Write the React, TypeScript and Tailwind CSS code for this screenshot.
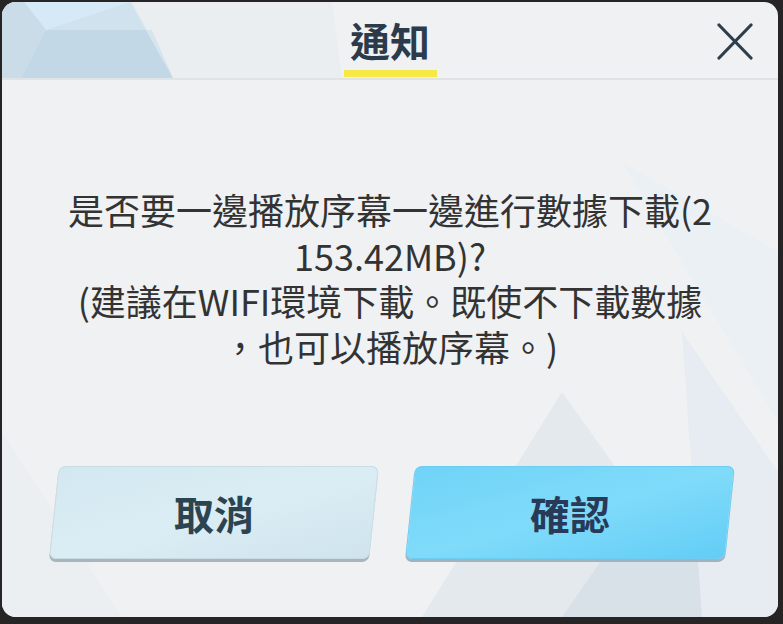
import React from "react";

const cjk = { fontFamily: '"Noto Sans CJK TC", "Noto Sans", sans-serif' };

export default function App() {
  return (
    <div className="w-[783px] h-[624px] bg-[#262425] pt-[2px] pl-[2px]" style={cjk}>
      <div className="relative w-[776px] h-[615px] rounded-[14px] bg-[#eff1f3] overflow-hidden">
        <svg className="absolute inset-0" width="776" height="615" viewBox="0 0 776 615">
          <polygon points="0,0 130,0 172,78 0,78" fill="#cfe2ee" />
          <polygon points="22,0 128,0 44,28" fill="#d5e9f7" />
          <polygon points="44,28 150,28 172,78 18,78" fill="#c2d8e6" />
          <polygon points="0,0 22,0 44,28 18,78 0,78" fill="#c9dce7" />
          <polygon points="128,0 330,0 340,78 172,78" fill="#e6ecf0" opacity="0.6" />
          <polygon points="560,390 720,615 420,615" fill="#e4e9ee" />
          <polygon points="640,500 760,615 560,615" fill="#d9e1e8" />
          <polygon points="680,330 776,470 776,615 700,615" fill="#e6ecf1" />
          <polygon points="0,430 120,615 0,615" fill="#eceff2" />
          <polygon points="620,160 776,250 776,420" fill="#ebf0f4" />
        </svg>
        <div className="relative flex flex-col h-full">
          <div className="relative h-[78px] border-b-2 border-[#dfe3e6] flex items-end justify-center">
            <div className="flex flex-col items-center">
              <div className="text-[40px] leading-[40px] font-bold text-[#2b3b4c] mb-[10px]">通知</div>
              <div className="w-[93px] h-[7px] bg-[#f6e947] mb-[1px]" />
            </div>
            <svg className="absolute left-[715px] top-[21px]" width="36" height="37" viewBox="0 0 36 37">
              <path d="M2 2 L34 35 M34 2 L2 35" stroke="#2e3e4c" strokeWidth="3.2" strokeLinecap="round" />
            </svg>
          </div>
          <div className="flex flex-col items-center pt-[107px] text-[36px] leading-[45.5px] text-[#333333] whitespace-nowrap">
            <div>是否要一邊播放序幕一邊進行數據下載(2</div>
            <div>153.42MB)?</div>
            <div>(建議在WIFI環境下載。既使不下載數據</div>
            <div>，也可以播放序幕。)</div>
          </div>
          <div className="flex justify-center gap-[36px] mt-[97px] pl-[4px]">
            <div className="w-[320px] h-[93px] -skew-x-6 rounded-[7px] bg-gradient-to-br from-[#d2e8f1] via-[#dbedf4] to-[#cfe4ee] border border-[#c9dce4] shadow-[0_3px_0_#a9b5bc] flex items-center justify-center">
              <span className="skew-x-6 text-[40px] font-bold text-[#2c4450]">取消</span>
            </div>
            <div className="w-[320px] h-[93px] -skew-x-6 rounded-[7px] bg-gradient-to-br from-[#6fd3f7] via-[#80dbfa] to-[#62cdf6] border border-[#6ccdf0] shadow-[0_3px_0_#9fb3c0] flex items-center justify-center">
              <span className="skew-x-6 text-[40px] font-bold text-[#283a58]">確認</span>
            </div>
          </div>
        </div>
      </div>
    </div>
  );
}
